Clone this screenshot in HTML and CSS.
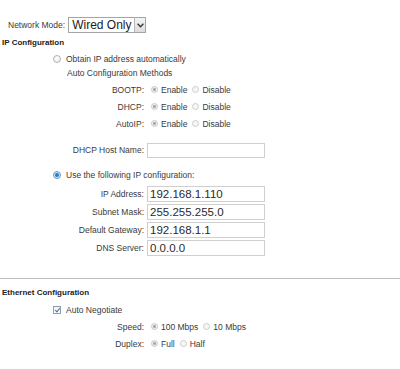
FILE: index.html
```html
<!DOCTYPE html>
<html lang="en">
<head>
    <meta charset="UTF-8">
    <meta name="viewport" content="width=device-width, initial-scale=1.0">
    <title>Network Settings</title>
    <link rel="stylesheet" href="styles.css">
</head>
<body>
    <form class="settings">
        <!-- Network mode -->
        <div class="mode-row">
            <label for="mode">Network Mode:</label>
            <div class="select">
                <span class="select-value">Wired Only</span>
                <span class="select-arrow">
                    <svg width="7" height="5" viewBox="0 0 7 5"><path d="M0.6 0.8 L3.5 3.8 L6.4 0.8" fill="none" stroke="#333" stroke-width="1.3"/></svg>
                </span>
            </div>
        </div>

        <!-- IP Configuration -->
        <div class="section">IP Configuration</div>
        <label class="opt"><input type="radio" name="ipmode"> Obtain IP address automatically</label>
        <div class="sub">Auto Configuration Methods</div>

        <div class="fields">
            <span class="lbl">BOOTP:</span>
            <span class="choices">
                <label><input type="radio" name="bootp" checked disabled> Enable</label>
                <label><input type="radio" name="bootp" disabled> Disable</label>
            </span>
            <span class="lbl">DHCP:</span>
            <span class="choices">
                <label><input type="radio" name="dhcp" checked disabled> Enable</label>
                <label><input type="radio" name="dhcp" disabled> Disable</label>
            </span>
            <span class="lbl">AutoIP:</span>
            <span class="choices">
                <label><input type="radio" name="autoip" checked disabled> Enable</label>
                <label><input type="radio" name="autoip" disabled> Disable</label>
            </span>
        </div>

        <div class="fields host">
            <label class="lbl" for="host">DHCP Host Name:</label>
            <input class="text" type="text" id="host" disabled>
        </div>

        <label class="opt use"><input type="radio" name="ipmode" checked> Use the following IP configuration:</label>

        <div class="fields static">
            <label class="lbl" for="ip">IP Address:</label>
            <input class="text" type="text" id="ip" value="192.168.1.110">
            <label class="lbl" for="mask">Subnet Mask:</label>
            <input class="text" type="text" id="mask" value="255.255.255.0">
            <label class="lbl" for="gw">Default Gateway:</label>
            <input class="text" type="text" id="gw" value="192.168.1.1">
            <label class="lbl" for="dns">DNS Server:</label>
            <input class="text" type="text" id="dns" value="0.0.0.0">
        </div>

        <hr class="divider">

        <!-- Ethernet Configuration -->
        <div class="section eth">Ethernet Configuration</div>
        <label class="opt"><input type="checkbox" checked> Auto Negotiate</label>

        <div class="fields">
            <span class="lbl">Speed:</span>
            <span class="choices">
                <label><input type="radio" name="speed" checked disabled> 100 Mbps</label>
                <label><input type="radio" name="speed" disabled> 10 Mbps</label>
            </span>
            <span class="lbl">Duplex:</span>
            <span class="choices">
                <label><input type="radio" name="duplex" checked disabled> Full</label>
                <label><input type="radio" name="duplex" disabled> Half</label>
            </span>
        </div>
    </form>
</body>
</html>
```

FILE: styles.css
```css
body {
    margin: 0;
    background: #fff;
    font-family: "Liberation Sans", Arial, sans-serif;
    font-size: 8.5px;
    color: #3a3a3a;
}
.settings {
    padding-top: 16px;
}
.mode-row {
    display: flex;
    align-items: center;
    gap: 3px;
    height: 18px;
    padding-left: 8px;
}
.select {
    display: flex;
    align-items: stretch;
    width: 78px;
    height: 16px;
    border: 1px solid #a5a5a5;
    box-sizing: border-box;
    background: #fff;
}
.select-value {
    flex: 1;
    padding-left: 3px;
    font-size: 12px;
    line-height: 14px;
    white-space: nowrap;
    color: #222;
}
.select-arrow {
    display: flex;
    align-items: center;
    justify-content: center;
    width: 10px;
    border-left: 1px solid #b8b8b8;
    background: linear-gradient(#f4f4f4, #dcdcdc);
}
.section {
    height: 17px;
    line-height: 17px;
    padding-left: 2px;
    font-size: 8px;
    font-weight: bold;
    color: #222;
}
.opt {
    display: flex;
    align-items: center;
    gap: 5px;
    height: 16px;
    padding-left: 53px;
}
.sub {
    height: 12px;
    line-height: 12px;
    padding-left: 67px;
    margin-bottom: 2px;
}
.fields {
    display: grid;
    grid-template-columns: 144px 118px;
    grid-auto-rows: 17px;
    column-gap: 3px;
    align-items: center;
}
.lbl {
    text-align: right;
}
.choices {
    display: flex;
    align-items: center;
    gap: 5px;
    padding-left: 4px;
}
.choices label {
    display: flex;
    align-items: center;
    gap: 3px;
}
.host {
    margin-top: 10px;
    grid-auto-rows: 16px;
}
.use {
    margin-top: 9px;
}
.static {
    margin-top: 2px;
    grid-auto-rows: 18px;
}
.text {
    width: 118px;
    height: 16px;
    box-sizing: border-box;
    margin: 0;
    padding: 0 2px;
    border: 1px solid #cfcfcf;
    background: #fff;
    font-family: "Liberation Sans", Arial, sans-serif;
    font-size: 11.5px;
    color: #2a2a2a;
    outline: none;
}
.host .text {
    height: 15px;
}
.divider {
    margin: 21px 0 6px;
    border: none;
    border-top: 1px solid #bdbdbd;
}
.eth {
    height: 16px;
    line-height: 16px;
}
.eth + .opt {
    height: 17px;
}
input[type="radio"] {
    appearance: none;
    -webkit-appearance: none;
    margin: 0;
    width: 8px;
    height: 8px;
    border-radius: 50%;
    border: 1px solid #b3b3b3;
    background: radial-gradient(circle at 50% 35%, #fff, #e8e8e8);
    box-sizing: border-box;
}
input[type="radio"]:disabled {
    width: 7px;
    height: 7px;
    border-color: #cdcdcd;
    background: #f6f6f6;
}
input[type="radio"]:checked {
    border-color: #6a98c2;
    background: radial-gradient(circle, #1f74c9 0, #3a8ad6 1.6px, #cfe2f3 2.4px, #f4f8fc 3.5px);
}
input[type="radio"]:checked:disabled {
    border-color: #c8c8c8;
    background: radial-gradient(circle, #9a9a9a 0, #b0b0b0 1.2px, #ececec 1.9px, #f6f6f6 3px);
}
input[type="checkbox"] {
    appearance: none;
    -webkit-appearance: none;
    margin: 0;
    width: 8px;
    height: 8px;
    border: 1px solid #8e9fb2;
    background: linear-gradient(#eef1f4, #fff);
    box-sizing: border-box;
    position: relative;
}
input[type="checkbox"]:checked::after {
    content: "";
    position: absolute;
    left: 1.5px;
    top: 0;
    width: 2px;
    height: 4px;
    border: solid #4d6e91;
    border-width: 0 1.2px 1.2px 0;
    transform: rotate(40deg);
}
```
